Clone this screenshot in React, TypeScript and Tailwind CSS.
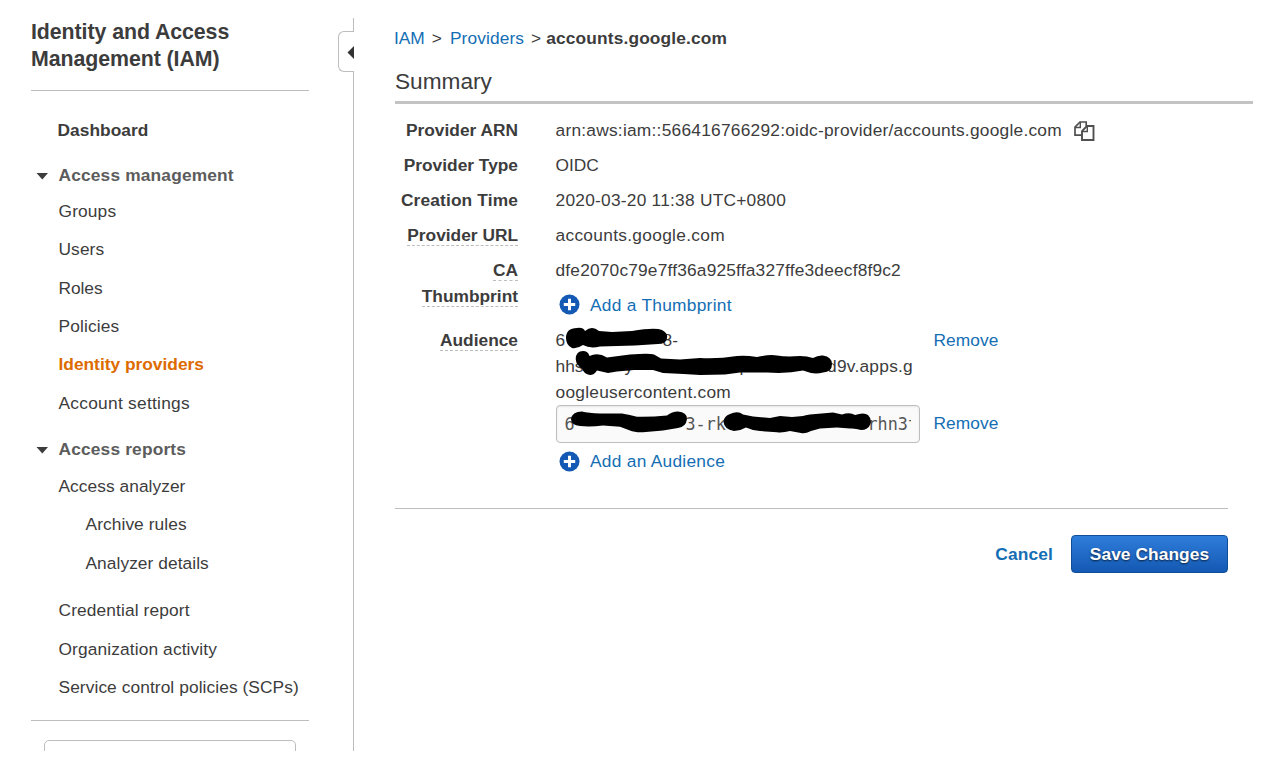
import React from "react";

type NavItem = { label: string; cls?: string };

const management: NavItem[] = [
  { label: "Groups", cls: "tracking-[0.15px]" },
  { label: "Users", cls: "tracking-[0.1px]" },
  { label: "Roles", cls: "tracking-[-0.05px]" },
  { label: "Policies", cls: "tracking-[0.15px]" },
  { label: "Identity providers", cls: "font-bold text-[#dd6b00]" },
  { label: "Account settings", cls: "tracking-[0.27px]" },
];

const reports: NavItem[] = [
  { label: "Access analyzer", cls: "tracking-[0.05px]" },
  { label: "Archive rules", cls: "pl-[27px] tracking-[0.08px]" },
  { label: "Analyzer details", cls: "pl-[27px] tracking-[0.06px]" },
];

const extra: NavItem[] = [
  { label: "Credential report", cls: "tracking-[0.12px]" },
  { label: "Organization activity", cls: "tracking-[0.12px]" },
  { label: "Service control policies (SCPs)", cls: "tracking-[0.08px]" },
];

function NavList({ items }: { items: NavItem[] }) {
  return (
    <ul className="pl-[27.5px]">
      {items.map((item) => (
        <li key={item.label} className="flex h-[38.3px] items-center whitespace-nowrap">
          <a className={item.cls}>{item.label}</a>
        </li>
      ))}
    </ul>
  );
}

function SectionHeading({ label }: { label: string }) {
  return (
    <div className="flex items-center pl-[5px] font-bold tracking-[0.17px] text-[#5c5c5c]">
      <svg width="13" height="7" viewBox="0 0 13 7" className="mt-[3px] mr-[9.5px]">
        <path d="M0.5 0H12L6.3 6.5Z" fill="#3c3c3c" />
      </svg>
      {label}
    </div>
  );
}

function Label({ children, hint }: { children: React.ReactNode; hint?: boolean }) {
  return (
    <div className="w-[123px] shrink-0 text-right font-bold">
      <span className={hint ? "border-b border-dashed border-[#bdbdbd]" : ""}>{children}</span>
    </div>
  );
}

function Row({ label, hint, children }: { label: React.ReactNode; hint?: boolean; children: React.ReactNode }) {
  return (
    <div className="flex h-[35px] gap-[37.5px] whitespace-nowrap">
      <Label hint={hint}>{label}</Label>
      <div className="flex tracking-[0.24px]">{children}</div>
    </div>
  );
}

function AddLink({ label, iconClass }: { label: string; iconClass?: string }) {
  return (
    <div className="flex items-center gap-[10.5px] pl-[3px] tracking-[0.27px] text-[#146eb4]">
      <svg width="21" height="21" viewBox="0 0 21 21" className={iconClass}>
        <circle cx="10.5" cy="10.5" r="10" fill="#1459b3" />
        <path d="M10.5 4.8V16.2M4.8 10.5H16.2" stroke="#fff" strokeWidth="3" />
      </svg>
      <a>{label}</a>
    </div>
  );
}

function Marks() {
  return (
    <svg
      className="pointer-events-none absolute top-[-2px] left-0"
      width="340"
      height="120"
      viewBox="556 325 340 120"
      fill="#000"
    >
      <path d="M566 338Q566 328 577 328Q583 327 585 331Q592 325 599 331L612 332L632 331Q655 327 662 330Q668 333 667 338Q666 344 658 344L635 345.5L600 346.5Q590 349 583 345Q577 349 572 348Q566 345 566 338Z" />
      <path d="M575.7 359Q576 351 583 351Q588 351 589.5 356Q598 352 607 357.5L630 354.5Q650 353 654 354.5L661 358.5L680 359.5L700 358Q718 359 737 356Q745 355 757 357Q770 354 777 355.5Q786 357 800 356Q807 356 813 358Q818 355 823 355.5Q832 357 832 364Q832 372 823 372.5Q817 374 811 373L803 370.5Q787 374 767 372.5L740 372.5L725 374.5L700 375Q685 374 663 373L653 370L634 370L617 371.5L608 373L597 370.5Q594 375 590 375Q584 374 582 368.5Q576 365 575.7 359Z" />
      <path d="M571 419Q572 411.7 582 411.5Q588 413 600 413.5L622 413.5Q630 415 637 416.7Q652 417 667 415.5Q672 411.5 678 411.5Q687 412 687 419Q686 427 678 428L663 430.5L643 432.3Q634 432.5 630 430.5L620 426.7L603 425.5Q590 427 580 426Q571 425 571 419Z" />
      <path d="M723.5 421.7Q724 416 730 414Q738 410.5 743 414.5L753 416.5L770 418L780 416L792 417L803 416Q805 415 810 414.5L833 412.5L842 414.5Q850 412 855 415Q864 412 868 415Q872 419 870.5 424Q868 430 861 430Q855 428 850 428.5L837 427.5L820 428.5L811 431Q805 434 801 433L790 431Q783 433 777 432.3L760 431L753 430L746 427.5Q740 431 734 431Q724 429 723.5 421.7Z" />
    </svg>
  );
}

export default function App() {
  return (
    <div className="flex h-[757px] w-[1270px] overflow-hidden bg-white font-['Liberation_Sans',Arial,sans-serif] text-[17.33px] leading-[26px] text-[#3c3c3c]">
      <aside className="h-[751px] w-[338px] shrink-0 overflow-hidden pt-[19px] pl-[31px]">
        <div className="w-[278px]">
          <h1 className="border-b border-[#bdbdbd] pb-[17px] text-[21.33px] leading-[27px] font-bold tracking-[-0.07px]">
            Identity and Access
            <br />
            Management (IAM)
          </h1>
          <div className="mt-[26px] flex h-[26px] items-center pl-[26.5px] font-bold tracking-[0.05px]">Dashboard</div>
          <div className="mt-[19px] h-[30px]">
            <SectionHeading label="Access management" />
          </div>
          <NavList items={management} />
          <div className="mt-[14px] h-[31px]">
            <SectionHeading label="Access reports" />
          </div>
          <NavList items={reports} />
          <div className="h-[9.4px]" />
          <NavList items={extra} />
          <div className="mt-[14px] border-t border-[#bdbdbd] px-[13px] pt-[19px]">
            <div className="h-[40px] rounded-[5px] border border-[#bdbdbd]" />
          </div>
        </div>
      </aside>

      <div className="flex h-[751px] w-4 shrink-0 flex-col pt-[18px]">
        <div className="h-[13px] border-r border-[#bdbdbd]" />
        <div className="flex h-[41px] items-center justify-end rounded-l-[6px] border border-r-0 border-[#bdbdbd]">
          <svg width="7" height="13" viewBox="0 0 7 13" className="mt-[2px]">
            <path d="M7 0V13L0.5 6.5Z" fill="#333" />
          </svg>
        </div>
        <div className="flex-1 border-r border-[#bdbdbd]" />
      </div>

      <main className="ml-[41px] w-[858px] shrink-0 pt-[25px]">
        <nav className="flex whitespace-nowrap">
          <a className="-ml-px text-[#146eb4]">IAM</a>
          <span className="ml-[7px]">&gt;</span>
          <a className="ml-[8px] tracking-[0.1px] text-[#146eb4]">Providers</a>
          <span className="ml-[7px]">&gt;</span>
          <b className="ml-[5px] tracking-[0.15px]">accounts.google.com</b>
        </nav>
        <h2 className="mt-[14px] h-[39px] border-b-[3px] border-[#c3c3c3] text-[22.67px] leading-[33px]">Summary</h2>

        <section className="pt-[13px]">
          <Row label="Provider ARN">
            <span>arn:aws:iam::566416766292:oidc-provider/accounts.google.com</span>
            <svg width="21" height="21" viewBox="0 0 21 21" fill="none" stroke="#505050" strokeWidth="1.7" className="mt-[4px] ml-[12px]">
              <path d="M7.5 14.2H1V6.2L6 1H12.2V5" />
              <path d="M1 6.5H6.3V1" strokeWidth="1.4" />
              <path d="M8 10.2L13 5H19.5V19H8Z" strokeWidth="1.9" />
              <path d="M8 10.5H13.3V5" strokeWidth="1.4" />
            </svg>
          </Row>
          <Row label="Provider Type">
            <span className="tracking-normal">OIDC</span>
          </Row>
          <Row label={<span className="tracking-[0.14px]">Creation Time</span>}>2020-03-20 11:38 UTC+0800</Row>
          <Row label="Provider URL" hint>
            <span className="tracking-[0.3px]">accounts.google.com</span>
          </Row>

          <div className="flex h-[70px] gap-[37.5px]">
            <Label hint>
              CA
              <br />
              Thumbprint
            </Label>
            <div className="flex flex-col gap-[9px]">
              <span className="tracking-[0.18px]">dfe2070c79e7ff36a925ffa327ffe3deecf8f9c2</span>
              <AddLink label="Add a Thumbprint" iconClass="-mt-[2px]" />
            </div>
          </div>

          <div className="flex gap-[37.5px] whitespace-nowrap">
            <Label hint>Audience</Label>
            <div className="relative w-[443px] shrink-0">
              <div className="flex">
                <div className="w-[378px] shrink-0">
                  <div className="flex">
                    <span className="w-[98px]">6</span>
                    <span className="pl-[9px]">8-</span>
                  </div>
                  <div className="flex">
                    <span className="w-[69px]">hhs</span>
                    <span className="w-[115px]">y</span>
                    <span className="w-[87.5px]">p</span>
                    <span className="tracking-[0.25px]">d9v.apps.g</span>
                  </div>
                  <div className="tracking-[0.25px]">oogleusercontent.com</div>
                </div>
                <a className="tracking-[0.07px] text-[#146eb4]">Remove</a>
              </div>
              <div className="flex">
                <div className="mr-[14px] flex h-[38px] w-[364px] shrink-0 items-center overflow-hidden rounded-[4px] border border-[#bdbdbd] bg-[#fafafa] px-[8px] font-['DejaVu_Sans_Mono',monospace] text-[16.8px] text-[#555] shadow-[inset_0_1px_2px_rgba(0,0,0,0.08)]">
                  <span className="w-[121px]">6</span>
                  <span className="w-[182px]">3-rk</span>
                  <span className="w-[43px] overflow-hidden">rhn3t</span>
                </div>
                <a className="pt-[5px] tracking-[0.07px] text-[#146eb4]">Remove</a>
              </div>
              <div className="pt-[5px]">
                <AddLink label="Add an Audience" />
              </div>
              <Marks />
            </div>
          </div>
        </section>

        <footer className="mt-[34px] flex w-[833px] items-center justify-end gap-[18px] border-t border-[#bdbdbd] pt-[26px] font-bold">
          <a className="tracking-[0.15px] text-[#146eb4]">Cancel</a>
          <button className="h-[38px] w-[157px] rounded-[4px] border border-[#0f4d97] bg-linear-to-b from-[#2e7dda] to-[#1459b3] font-bold tracking-[0.08px] text-white [text-shadow:0_1px_2px_rgba(0,0,0,0.7)]">
            Save Changes
          </button>
        </footer>
      </main>
    </div>
  );
}
